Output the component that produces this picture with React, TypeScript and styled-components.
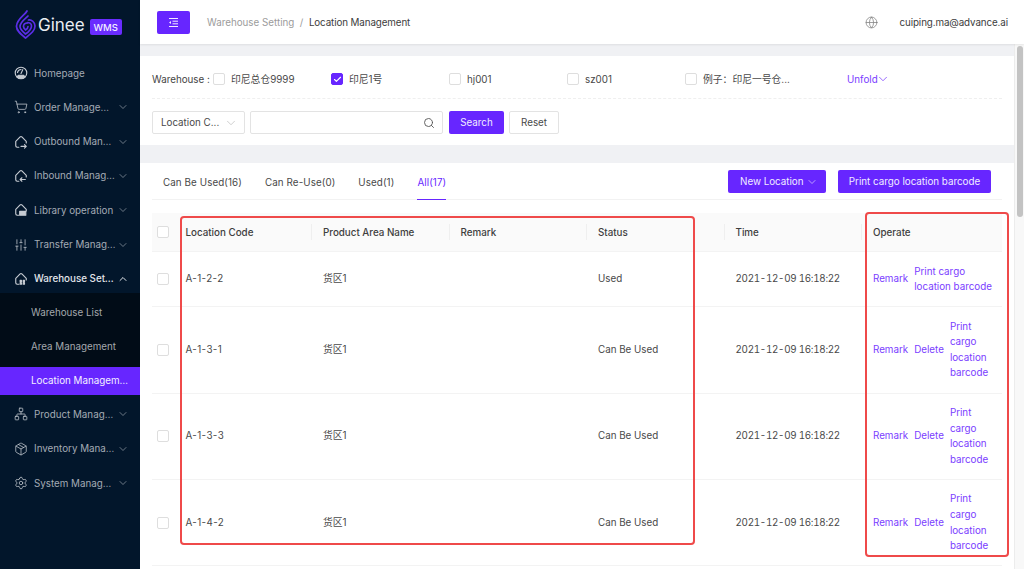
import React from "react";
import styled, { createGlobalStyle } from "styled-components";
import { ChevronDown, ChevronUp, Search as SearchIcon, ShoppingCart, SlidersVertical, Network, Package, Settings, Check, Globe } from "lucide-react";

const Global = createGlobalStyle`
  html, body { margin: 0; padding: 0; height: 100%; overflow: hidden; }
  body { font-family: Inter, "Noto Sans CJK SC", sans-serif; font-size: 9.8px; color: #444; background: #f0f1f4; }
  * { box-sizing: border-box; }
`;

const Page = styled.div`position: relative; display: flex; width: 1024px; height: 569px; overflow: hidden;`;
const Sidebar = styled.aside`width: 140px; flex: none; background: #02162b; display: flex; flex-direction: column;`;
const LogoRow = styled.div`height: 59px; display: flex; align-items: flex-start; padding: 10px 0 0 15px;`;
const LogoText = styled.span`font-size: 17px; line-height: 30px; color: #e9edf2; margin-left: 2px;`;
const WmsBadge = styled.span`margin: 9px 0 0 5px; width: 32px; height: 16px; border-radius: 2px; background: #6a2cff; color: #f3efff; font-size: 9.5px; font-weight: 500; display: flex; align-items: center; justify-content: center;`;
const Menu = styled.nav`display: flex; flex-direction: column;`;
const MenuRow = styled.div<{ $open?: boolean }>`
  height: 28px; margin-bottom: 6.33px; padding: 0 11px 0 14px; display: flex; align-items: center; gap: 6px;
  color: ${p => (p.$open ? "#e2e6eb" : "#a4abb5")}; font-weight: ${p => (p.$open ? 500 : 400)};
  & > svg { margin-left: -5px; flex: none; }
`;
const IconSlot = styled.span`width: 14px; height: 14px; flex: none; display: flex; color: #c6cbd2;`;
const MenuLabel = styled.span`flex: 1; min-width: 0; white-space: nowrap; overflow: hidden; text-overflow: ellipsis;`;
const SubMenu = styled.div`background: #010c17; padding-top: 6px; display: flex; flex-direction: column; margin-top: -6.33px; margin-bottom: 5.5px;`;
const SubRow = styled.div<{ $active?: boolean }>`
  height: 28px; flex: none; margin-bottom: ${p => (p.$active ? "0" : "6px")}; padding: 0 11px 0 31px; display: flex; align-items: center;
  background: ${p => (p.$active ? "#6726ff" : "transparent")}; color: ${p => (p.$active ? "#f4f0ff" : "#a4a8ad")};
  white-space: nowrap; overflow: hidden;
`;
const SubLabel = styled.span`flex: 1; min-width: 0; overflow: hidden; text-overflow: ellipsis;`;

const Main = styled.div`flex: 1; min-width: 0; display: flex; flex-direction: column;`;
const TopBar = styled.header`height: 44px; flex: none; background: #fff; display: flex; align-items: center; padding: 0 16px 0 17px; box-shadow: 0 1px 2px rgba(0,0,0,.08); position: relative; z-index: 1;`;
const MenuButton = styled.button`width: 33px; height: 23px; border: 0; border-radius: 2px; background: #6726ff; display: flex; align-items: center; justify-content: center; padding: 0;`;
const Crumbs = styled.div`margin-left: 17px; flex: 1; display: flex; gap: 5.5px; white-space: nowrap;`;
const CrumbMuted = styled.span`color: #9b9b9b;`;
const CrumbCurrent = styled.span`color: #3c3c3c; letter-spacing: -0.1px;`;
const Email = styled.span`margin-left: 22px; color: #3c3c3c; letter-spacing: -0.1px;`;
const Body = styled.div`flex: 1; min-height: 0; display: flex;`;
const Content = styled.div`flex: 1; min-width: 0; padding-top: 12px; display: flex; flex-direction: column; gap: 18px; overflow: hidden;`;
const Track = styled.div`width: 10px; flex: none; background: #f8f8f8; border-left: 1px solid #ececec; padding: 2px 1px 0 2px;`;
const Thumb = styled.div`height: 171px; border-radius: 3px; background: #c3c3c3;`;

const FilterCard = styled.section`height: 89px; flex: none; background: #fff; padding: 0 12px;`;
const CheckRow = styled.div`height: 43px; display: flex; align-items: center; border-bottom: 1px dashed #efefef; padding-top: 4px;`;
const FilterLabel = styled.span`width: 61px; flex: none; color: #444; white-space: nowrap;`;
const CheckItem = styled.label`width: 118px; flex: none; display: flex; align-items: center; gap: 6px; color: #484848; white-space: nowrap;`;
const Box = styled.span<{ $on?: boolean }>`
  width: 12px; height: 12px; flex: none; border-radius: 2px; display: inline-flex; align-items: center; justify-content: center; vertical-align: middle;
  border: 1px solid ${p => (p.$on ? "#6726ff" : "#dedede")}; background: ${p => (p.$on ? "#6726ff" : "#fff")};
`;
const Unfold = styled.span`margin-left: 44px; color: #7a3dff; display: flex; align-items: center; & > svg { margin-left: -2px; }`;
const SearchRow = styled.div`display: flex; margin-top: 12px; height: 23px;`;
const SelectBox = styled.div`width: 93px; border: 1px solid #e3e3e3; border-radius: 2px; display: flex; align-items: center; justify-content: space-between; padding: 0 6px 0 8px; color: #484848;`;
const InputBox = styled.div`width: 193px; margin-left: 5px; border: 1px solid #e3e3e3; border-radius: 2px; display: flex; align-items: center; justify-content: flex-end; padding-right: 7px; color: #555;`;
const PrimaryButton = styled.button<{ $w: number }>`
  width: ${p => p.$w}px; height: 23px; border: 0; border-radius: 2px; background: #6726ff; color: #f1ecff; padding: 0;
  font: inherit; display: flex; align-items: center; justify-content: center; gap: 6px; white-space: nowrap; flex: none;
`;
const SearchButton = styled(PrimaryButton)`margin-left: 6px;`;
const DropButton = styled(PrimaryButton)`justify-content: flex-start; padding-left: 12px; gap: 2px;`;
const ResetButton = styled.button`width: 50px; height: 23px; margin-left: 5px; border: 1px solid #e3e3e3; border-radius: 2px; background: #fff; color: #484848; font: inherit; padding: 0;`;

const TableCard = styled.section`flex: 1; background: #fff; padding: 0 12px;`;
const TabBar = styled.div`height: 37px; display: flex; align-items: flex-start; border-bottom: 1px solid #f2f2f2; padding: 7px 11px 0;`;
const Tab = styled.span<{ $active?: boolean }>`
  height: 30px; line-height: 25px; margin-right: 23px; white-space: nowrap; letter-spacing: 0.1px;
  color: ${p => (p.$active ? "#6726ff" : "#484848")};
  border-bottom: ${p => (p.$active ? "1px solid #6726ff" : "0")};
`;
const TabActions = styled.div`margin-left: auto; display: flex; gap: 12px;`;
const Table = styled.table`width: 850px; margin-top: 13px; border-collapse: collapse; table-layout: fixed;`;
const Th = styled.th`height: 38.5px; background: #fafafa; padding: 0 11px; text-align: left; font-weight: 500; color: #3e3e3e; position: relative; border-bottom: 1px solid #f3f3f3;`;
const ThBox = styled(Th)`padding: 0 0 0 5px; line-height: 0;`;
const Divider = styled.i`position: absolute; right: 0; top: 11px; width: 1px; height: 16px; background: #efefef;`;
const Td = styled.td`padding: 11.5px 11px; line-height: 15.6px; color: #484848; border-bottom: 1px solid #f3f3f3; vertical-align: middle;`;
const TdBox = styled(Td)`padding: 0 0 0 5px; line-height: 0;`;
const TimeCell = styled(Td)`font-variant-numeric: tabular-nums; letter-spacing: -0.27px; white-space: nowrap;`;
const CodeCell = styled(Td)`letter-spacing: 0.4px;`;
const OperateCell = styled(Td)`padding-right: 8px;`;
const Actions = styled.div`display: flex; align-items: center; gap: 6px; color: #7a3dff;`;
const ActionWord = styled.span`flex: none;`;
const ActionWrap = styled.span<{ $narrow?: boolean }>`flex: 1; min-width: 0; max-width: ${p => (p.$narrow ? "42px" : "none")};`;
const Mark = styled.div<{ $x: number; $y: number; $w: number; $h: number }>`
  position: absolute; left: ${p => p.$x}px; top: ${p => p.$y}px; width: ${p => p.$w}px; height: ${p => p.$h}px;
  border: 2.5px solid #ef4a4a; border-radius: 4px; pointer-events: none;
`;

const svgProps = { width: 14, height: 14, viewBox: "0 0 16 16", fill: "none", stroke: "currentColor", strokeWidth: 1.3, strokeLinecap: "round" as const, strokeLinejoin: "round" as const };
const Gauge = () => (
  <svg {...svgProps}>
    <circle cx="8" cy="8" r="6.6" />
    <path d="M8 8.5 10 4.2M4 7.5A4.2 4.2 0 0 1 8 4" />
    <path d="M3.4 12.4a6.6 6.6 0 0 0 9.2 0L11 10.6H5z" fill="currentColor" />
  </svg>
);
const House = ({ children }: { children: React.ReactNode }) => (
  <svg {...svgProps}>
    <path d="M5.5 14H3.6A1.6 1.6 0 0 1 2 12.4V7.2L7 2.2a1.4 1.4 0 0 1 2 0l5 5v2" />
    {children}
  </svg>
);
const Ginee = () => (
  <svg width="21" height="30" viewBox="0 0 21 30" fill="none" stroke="#5a2ee6" strokeWidth="1.7" strokeLinecap="round">
    <path d="M12 1C10 5 2 9 1.5 16c-.3 4.5 4 8 9 12 5-4 9.5-7 9.5-12 0-4-3.5-6.5-6.5-6" />
    <path d="M13 6C10 9 5 12 5 16.5c0 3 3 5.5 5.5 7.5 3-2 6-4.5 6-8 0-2.5-2.5-3.5-4-3.5" />
    <path d="M12.5 13c-2.5 0-4 1.5-4 3.5 0 1.5 1 2.5 2 3.5 1.5-1 2.5-2 2.5-3.5" />
  </svg>
);
const CollapseGlyph = () => (
  <svg width="11" height="9" viewBox="0 0 11 9" fill="none" stroke="#f1ecff" strokeWidth="1">
    <path d="M1 .5h9M4.5 3.2h5.5M4.5 5.8h5.5M1 8.5h9" />
    <path d="M3 3v3L1 4.5z" fill="#f1ecff" stroke="none" />
  </svg>
);

const menuTop: [string, React.ReactNode][] = [
  ["Order Management", <ShoppingCart size={14} strokeWidth={1.3} />],
  ["Outbound Management", <House><path d="M8 13h6M12 11l2 2-2 2" /></House>],
  ["Inbound Management", <House><path d="M13 12H7M9 10l-2 2 2 2" /></House>],
  ["Library operation", <House><rect x="6.5" y="9.5" width="7" height="4.5" fill="currentColor" /></House>],
  ["Transfer Management", <SlidersVertical size={14} strokeWidth={1.3} />],
];
const menuBottom: [string, React.ReactNode][] = [
  ["Product Management", <Network size={14} strokeWidth={1.3} />],
  ["Inventory Management", <Package size={14} strokeWidth={1.3} />],
  ["System Management", <Settings size={14} strokeWidth={1.3} />],
];
const warehouses: [string, boolean][] = [["印尼总仓9999", false], ["印尼1号", true], ["hj001", false], ["sz001", false], ["例子：印尼一号仓...", false]];
const rows = [
  { code: "A-1-2-2", status: "Used", del: false },
  { code: "A-1-3-1", status: "Can Be Used", del: true },
  { code: "A-1-3-3", status: "Can Be Used", del: true },
  { code: "A-1-4-2", status: "Can Be Used", del: true },
  { code: "A-1-4-3", status: "Can Be Used", del: true },
];
const heads = ["Location Code", "Product Area Name", "Remark", "Status", "Time", "Operate"];

const Chevron = () => <ChevronDown size={12} strokeWidth={1.3} />;

export default function App() {
  return (
    <Page>
      <Global />
      <Sidebar>
        <LogoRow><Ginee /><LogoText>Ginee</LogoText><WmsBadge>WMS</WmsBadge></LogoRow>
        <Menu>
          <MenuRow><IconSlot><Gauge /></IconSlot><MenuLabel>Homepage</MenuLabel></MenuRow>
          {menuTop.map(([label, icon]) => (
            <MenuRow key={label}><IconSlot>{icon}</IconSlot><MenuLabel>{label}</MenuLabel><Chevron /></MenuRow>
          ))}
          <MenuRow $open>
            <IconSlot><House><path d="M7 9.5h1.5V11H7zM10.5 9.5H12V11h-1.5zM7 12.5h1.5V14H7zM10.5 12.5H12V14h-1.5z" /></House></IconSlot>
            <MenuLabel>Warehouse Setting</MenuLabel><ChevronUp size={12} strokeWidth={2} />
          </MenuRow>
          <SubMenu>
            <SubRow><SubLabel>Warehouse List</SubLabel></SubRow>
            <SubRow><SubLabel>Area Management</SubLabel></SubRow>
            <SubRow $active><SubLabel>Location Management</SubLabel></SubRow>
          </SubMenu>
          {menuBottom.map(([label, icon]) => (
            <MenuRow key={label}><IconSlot>{icon}</IconSlot><MenuLabel>{label}</MenuLabel><Chevron /></MenuRow>
          ))}
        </Menu>
      </Sidebar>
      <Main>
        <TopBar>
          <MenuButton aria-label="collapse"><CollapseGlyph /></MenuButton>
          <Crumbs><CrumbMuted>Warehouse Setting</CrumbMuted><CrumbMuted>/</CrumbMuted><CrumbCurrent>Location Management</CrumbCurrent></Crumbs>
          <Globe size={13} color="#808080" strokeWidth={1.4} />
          <Email>cuiping.ma@advance.ai</Email>
        </TopBar>
        <Body>
          <Content>
            <FilterCard>
              <CheckRow>
                <FilterLabel>Warehouse :</FilterLabel>
                {warehouses.map(([name, on]) => (
                  <CheckItem key={name}>
                    <Box $on={on}>{on && <Check size={9} color="#fff" strokeWidth={3} />}</Box>{name}
                  </CheckItem>
                ))}
                <Unfold>Unfold<ChevronDown size={14} strokeWidth={1.3} /></Unfold>
              </CheckRow>
              <SearchRow>
                <SelectBox>Location C...<ChevronDown size={14} color="#bbb" strokeWidth={1.2} /></SelectBox>
                <InputBox><SearchIcon size={12} strokeWidth={1.8} /></InputBox>
                <SearchButton $w={55}>Search</SearchButton>
                <ResetButton>Reset</ResetButton>
              </SearchRow>
            </FilterCard>
            <TableCard>
              <TabBar>
                <Tab>Can Be Used(16)</Tab><Tab>Can Re-Use(0)</Tab><Tab>Used(1)</Tab><Tab $active>All(17)</Tab>
                <TabActions>
                  <DropButton $w={98}>New Location<ChevronDown size={12} strokeWidth={1.2} /></DropButton>
                  <PrimaryButton $w={153}>Print cargo location barcode</PrimaryButton>
                </TabActions>
              </TabBar>
              <Table>
                <colgroup>
                  <col width="22.5" />
                  {heads.map((h, i) => <col key={h} width={i < 5 ? "137.5" : "140"} />)}
                </colgroup>
                <thead>
                  <tr>
                    <ThBox><Box /></ThBox>
                    {heads.map((h, i) => <Th key={h}>{h}{i < 5 && <Divider />}</Th>)}
                  </tr>
                </thead>
                <tbody>
                  {rows.map(r => (
                    <tr key={r.code}>
                      <TdBox><Box /></TdBox>
                      <CodeCell>{r.code}</CodeCell>
                      <Td>货区1</Td>
                      <Td />
                      <Td>{r.status}</Td>
                      <TimeCell>2021-12-09 16:18:22</TimeCell>
                      <OperateCell>
                        <Actions>
                          <ActionWord>Remark</ActionWord>
                          {r.del && <ActionWord>Delete</ActionWord>}
                          <ActionWrap $narrow={r.del}>Print cargo location barcode</ActionWrap>
                        </Actions>
                      </OperateCell>
                    </tr>
                  ))}
                </tbody>
              </Table>
            </TableCard>
          </Content>
          <Track><Thumb /></Track>
        </Body>
      </Main>
      <Mark $x={180} $y={216} $w={515} $h={329} />
      <Mark $x={865} $y={212} $w={144} $h={345} />
    </Page>
  );
}
